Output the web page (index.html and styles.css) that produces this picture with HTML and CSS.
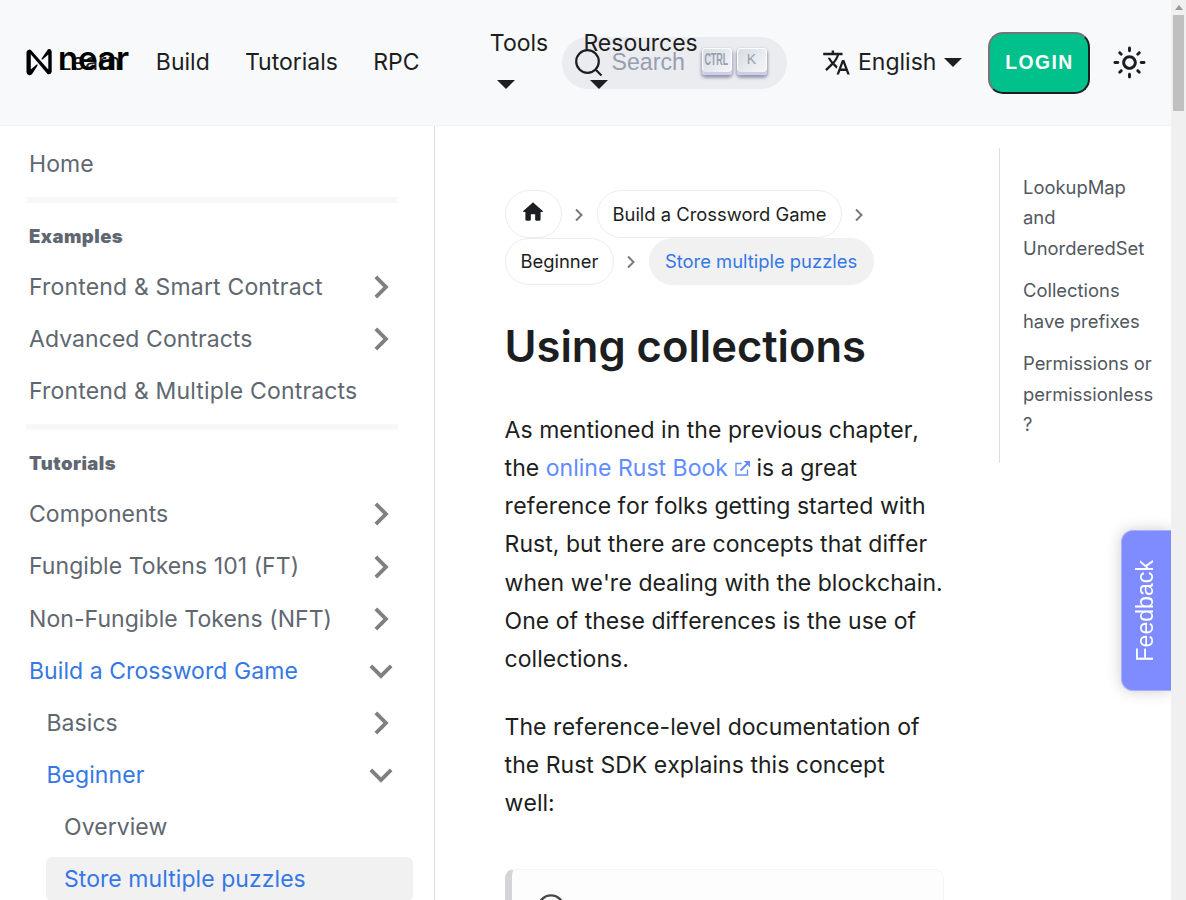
FILE: index.html
```html
<!DOCTYPE html>
<html lang="en">
<head>
<meta charset="utf-8">
<title>Using collections</title>
<link rel="stylesheet" href="styles.css">
</head>
<body>
<div class="page">
  <header class="navbar">
    <a class="brand">
      <svg width="26" height="28" viewBox="0 0 26 28"><path d="M22 1.2 15.6 10.600a.7.7 0 0 0 1 .9L22.300 6.500v15L4.900 1.900A3.200 3.200 0 0 0 .5 4v20a3.200 3.200 0 0 0 5.800 1.800l5.300-8.400a.7.7 0 0 0-1-.9L4.800 21.500V6.300L21.500 26a3.200 3.200 0 0 0 4.200-2V3.500A3 3 0 0 0 22 1.200z"/></svg>
      <span class="wordmark">near</span>
    </a>
    <nav class="links">
      <a>Learn</a><a>Build</a><a>Tutorials</a><a>RPC</a>
      <span class="divider"></span>
      <a class="stacked">Tools<i class="caret"></i></a>
      <a class="stacked res">Resources<i class="caret"></i></a>
    </nav>
    <div class="search">
      <svg class="lens" width="28" height="28" viewBox="0 0 28 28" fill="none" stroke="#1c1e21" stroke-width="2.200"><circle cx="12.500" cy="12.500" r="11.300"/><path d="m20.500 20.500 6 6"/></svg>
      <span class="placeholder">Search</span>
      <kbd class="key"><span class="ctrl">CTRL</span></kbd><kbd class="key">K</kbd>
    </div>
    <a class="lang">
      <svg width="29" height="29" viewBox="0 0 24 24" fill="#1c1e21"><path d="M12.870 15.070l-2.540-2.510.030-.030c1.740-1.940 2.980-4.170 3.710-6.530H17V4h-7V2H8v2H1v1.990h11.170C11.500 7.920 10.440 9.750 9 11.350 8.070 10.320 7.300 9.190 6.690 8h-2c.730 1.630 1.730 3.170 2.980 4.560l-5.090 5.020L4 19l5-5 3.110 3.110.760-2.040zM18.500 10h-2L12 22h2l1.120-3h4.750L21 22h2l-4.500-12zm-2.620 7l1.620-4.330L19.120 17h-3.240z"/></svg>
      <span>English</span><i class="caret"></i>
    </a>
    <button class="login">LOGIN</button>
    <svg class="sun" width="35" height="35" viewBox="0 0 24 24" fill="#1c1e21"><path d="M12,9c1.650,0,3,1.350,3,3s-1.350,3-3,3s-3-1.350-3-3S10.350,9,12,9 M12,7c-2.760,0-5,2.240-5,5s2.240,5,5,5s5-2.240,5-5 S14.760,7,12,7L12,7z M2,13l2,0c0.550,0,1-0.450,1-1s-0.450-1-1-1l-2,0c-0.550,0-1,0.450-1,1S1.450,13,2,13z M20,13l2,0c0.550,0,1-0.450,1-1 s-0.450-1-1-1l-2,0c-0.550,0-1,0.450-1,1S19.450,13,20,13z M11,2v2c0,0.550,0.450,1,1,1s1-0.450,1-1V2c0-0.550-0.450-1-1-1S11,1.450,11,2z M11,20v2c0,0.550,0.450,1,1,1s1-0.450,1-1v-2c0-0.550-0.450-1-1-1C11.450,19,11,19.450,11,20z M5.990,4.580c-0.390-0.390-1.030-0.390-1.410,0 c-0.390,0.390-0.390,1.030,0,1.410l1.060,1.060c0.390,0.390,1.030,0.390,1.410,0s0.390-1.030,0-1.410L5.990,4.580z M18.360,16.950 c-0.390-0.390-1.030-0.390-1.410,0c-0.390,0.390-0.390,1.030,0,1.410l1.060,1.060c0.390,0.390,1.030,0.390,1.410,0c0.390-0.390,0.390-1.030,0-1.410 L18.360,16.950z M19.420,5.990c0.390-0.390,0.390-1.030,0-1.410c-0.390-0.390-1.030-0.390-1.410,0l-1.060,1.060c-0.390,0.390-0.390,1.030,0,1.410 s1.030,0.390,1.410,0L19.420,5.990z M7.050,18.360c0.390-0.390,0.390-1.030,0-1.410c-0.390-0.390-1.030-0.390-1.410,0l-1.060,1.060 c-0.390,0.390-0.390,1.030,0,1.410s1.030,0.390,1.410,0L7.050,18.360z"/></svg>
  </header>
  <div class="columns">
    <aside class="sidebar">
      <a class="item">Home</a>
      <hr>
      <h2>Examples</h2>
      <a class="item wide">Frontend &amp; Smart Contract<svg class="chev"><use href="#chev"/></svg></a>
      <a class="item">Advanced Contracts<svg class="chev"><use href="#chev"/></svg></a>
      <a class="item wide">Frontend &amp; Multiple Contracts</a>
      <hr>
      <h2>Tutorials</h2>
      <a class="item">Components<svg class="chev"><use href="#chev"/></svg></a>
      <a class="item">Fungible Tokens 101 (FT)<svg class="chev"><use href="#chev"/></svg></a>
      <a class="item">Non-Fungible Tokens (NFT)<svg class="chev"><use href="#chev"/></svg></a>
      <a class="item active">Build a Crossword Game<svg class="chev open"><use href="#chev"/></svg></a>
      <a class="item l2">Basics<svg class="chev"><use href="#chev"/></svg></a>
      <a class="item l2 active">Beginner<svg class="chev open"><use href="#chev"/></svg></a>
      <a class="item l3">Overview</a>
      <a class="item l3 active current">Store multiple puzzles</a>
    </aside>
    <main class="content">
      <div class="crumbs">
        <div class="row">
          <a class="pill home"><svg width="26" height="26" viewBox="0 0 24 24"><path d="M10 19v-5h4v5c0 .55.45 1 1 1h3c.55 0 1-.45 1-1v-7h1.700c.46 0 .68-.57.33-.87L12.670 3.600c-.38-.34-.96-.34-1.340 0l-8.360 7.530c-.34.3-.13.87.33.87H5v7c0 .55.45 1 1 1h3c.55 0 1-.45 1-1z" fill="#1c1e21"/></svg></a>
          <svg class="sep"><use href="#sep"/></svg>
          <a class="pill">Build a Crossword Game</a>
          <svg class="sep"><use href="#sep"/></svg>
        </div>
        <div class="row second">
          <a class="pill">Beginner</a>
          <svg class="sep"><use href="#sep"/></svg>
          <a class="pill here">Store multiple puzzles</a>
        </div>
      </div>
      <h1>Using collections</h1>
      <p>As mentioned in the previous chapter,<br>the <a class="link">online Rust Book<svg class="ext" width="15" height="15" viewBox="0 0 15 15" fill="none" stroke="#608cff"><path d="M6.500 2.500h-5.500v11.500h11.500V8.500" stroke-width="1.300"/><path d="M5.500 9.500 12.500 2.500" stroke-width="2"/><path d="M8.800 0H15v6.200z" fill="#608cff" stroke="none"/></svg></a> is a great<br>reference for folks getting started with<br>Rust, but there are concepts that differ<br>when we're dealing with the blockchain.<br>One of these differences is the use of<br>collections.</p>
      <p>The reference-level documentation of<br>the Rust SDK explains this concept<br>well:</p>
      <div class="note"><svg width="28" height="28" viewBox="0 0 28 28" fill="none" stroke="#474748" stroke-width="2.400"><circle cx="14" cy="14" r="12.600"/></svg></div>
    </main>
    <aside class="toc">
      <a>LookupMap<br>and<br>UnorderedSet</a>
      <a>Collections<br>have prefixes</a>
      <a>Permissions or<br>permissionless<br>?</a>
    </aside>
  </div>
</div>
<div class="scrollbar"><i class="up"></i><i class="thumb"></i></div>
<div class="feedback"><span>Feedback</span></div>
<svg class="defs"><defs>
  <symbol id="chev" viewBox="0 0 24 24"><path d="M8.590 16.590 13.170 12 8.590 7.410 10 6l6 6-6 6z" fill="#808080"/></symbol>
  <symbol id="sep" viewBox="0 0 12 14"><path d="m3 1.500 5.500 5.500L3 12.500" fill="none" stroke="#7a7a7a" stroke-width="2"/></symbol>
</defs></svg>
</body>
</html>
```
FILE: styles.css
```css
* { box-sizing: border-box; }
body { margin: 0; height: 900px; overflow: hidden; display: flex; background: #fff; font: 23px/38.150px Inter, sans-serif; color: #1c1e21; }
.page { width: 1171px; height: 900px; overflow: hidden; display: flex; flex-direction: column; flex: none; }
.navbar { height: 126px; flex: none; background: #f8f9fb; border-bottom: 1px solid #f2f3f5; display: flex; align-items: center; position: relative; padding-left: 58.500px; }
.brand { position: absolute; left: 26px; top: 48px; display: flex; }
.wordmark { position: absolute; left: 32px; top: -9px; font-size: 33px; font-weight: 600; letter-spacing: -.3px; color: #000; }
.links { display: flex; align-items: center; gap: 35.200px; width: 503.500px; height: 100%; white-space: nowrap; flex: none; }
.divider { width: 2px; height: 30px; background: #999; }
.stacked { display: flex; flex-direction: column; position: relative; z-index: 1; padding-bottom: 12px; }
.stacked .caret { margin: 17px 0 0 7px; }
.caret { display: block; width: 0; border: 9px solid transparent; border-top-color: #1c1e21; border-bottom: 0; }
.search { width: 225px; height: 52px; border-radius: 26px; background: #ebecf0; display: flex; align-items: center; padding-left: 13px; flex: none; }
.placeholder { font: 23.150px/48px "Liberation Sans", sans-serif; color: #969faf; width: 89px; margin-left: 8.500px; padding-bottom: 1px; }
.key { width: 30px; height: 27px; margin: 0 4px 3px 1px; border-radius: 4px; background: linear-gradient(-225deg, #d5dbe4, #f8f8f8); box-shadow: inset 0 -3px 0 0 #cdcde6, inset 0 0 1px 1px #fff, 0 2px 3px 1px rgba(30, 35, 90, .4); font: 14px/23px "Liberation Sans", sans-serif; color: #969faf; text-align: center; }
.ctrl { display: inline-block; margin: 0 -10px; font-size: 16px; font-weight: 700; transform: scaleX(.56); }
.lang { display: flex; align-items: center; margin-left: 35px; }
.lang span { margin: 0 8px 0 7px; }
.login { width: 102px; height: 62px; margin-left: 26px; padding: 0; border: 2px solid #1c1e21; border-top-color: #767676; border-left-color: #767676; border-radius: 15px; background: #00c08b; color: #fff; font: 700 19.300px "Liberation Sans", sans-serif; letter-spacing: 1.500px; }
.sun { margin-left: 22px; }
.columns { display: flex; flex: 1; min-height: 0; }
.sidebar { width: 435px; border-right: 1px solid #dadde1; padding: 12px 21px 0 26px; flex: none; color: #606770; }
.item { display: flex; align-items: center; justify-content: space-between; height: 52.100px; padding: 0 13px 0 3px; white-space: nowrap; border-radius: 6px; letter-spacing: .06px; }
.item.wide { letter-spacing: .17px; }
.item.l2 { padding-left: 20.500px; }
.item.l3 { padding-left: 18px; margin-left: 20px; }
.active { color: #3578e5; }
.item.current { background: #f1f1f1; margin-top: 4px; height: 44px; }
.chev { width: 46px; height: 46px; margin-right: -4.400px; }
.open { transform: rotate(90deg); }
.sidebar hr { margin: 7px 15px 0 0; height: 6px; border: 0; background: #f8f8f8; }
.sidebar h2 { margin: 18px 3px 9px; font: 900 18.500px/31px Inter, sans-serif; letter-spacing: .45px; }
.content { width: 440px; margin-left: 70px; padding-top: 64px; flex: none; white-space: nowrap; }
.crumbs { font-size: 18.400px; line-height: 46px; }
.row { display: flex; align-items: center; height: 47.500px; }
.second { line-height: 45px; }
.pill { border: 1px solid #ededed; border-radius: 24px; height: 47.500px; padding: 0 15px 0 14.500px; }
.home { width: 57px; display: flex; align-items: center; justify-content: center; }
.home svg { margin: -3px 0 0 -1px; }
.sep { width: 12px; height: 14px; margin: 2px 12px 0 11px; }
.here { background: #f1f1f1; color: #3578e5; border-color: #f1f1f1; padding-right: 15.500px; }
h1 { margin: 32px 0 36px -.5px; font: 600 43.500px/58px Inter, sans-serif; }
p { margin: 0 0 29.700px -.4px; letter-spacing: .03px; font-kerning: none; }
.link { color: #608cff; }
.ext { margin: 0 0 0 7px; }
.note { margin-top: 47px; width: 439px; height: 90px; border: 1px solid #f5f5f5; border-left: 7px solid #d4d5d8; border-radius: 9px; background: #fdfdfd; padding: 24px 0 0 25px; }
.toc { margin: 22px 0 0 54px; width: 172px; height: 315px; border-left: 1px solid #dadde1; padding: 23.600px 0 0 23px; font-size: 18.400px; line-height: 30.500px; color: #525860; display: flex; flex-direction: column; gap: 12px; white-space: nowrap; }
.scrollbar { width: 15px; height: 900px; background: #f0f0f0; padding: 5px 2px 0; flex: none; }
.up { display: block; width: 0; margin: 0 auto; border: 4px solid transparent; border-top: 0; border-bottom: 5px solid #9a9a9a; }
.thumb { display: block; height: 96px; margin-top: 5px; background: #c0c0c0; }
.feedback { position: fixed; left: 1121px; top: 530px; width: 50px; height: 161px; background: #7f8cff; border: 1px solid #a9b1ff; border-right: 0; border-radius: 12px 0 0 12px; display: flex; align-items: center; justify-content: center; clip-path: inset(-20px 0 -20px -20px); box-shadow: 0 0 15px rgba(0, 0, 0, .2); color: #fff; }
.feedback span { writing-mode: vertical-rl; transform: rotate(180deg); font: 23.150px/30px "Liberation Sans", sans-serif; margin-right: 3px; }
.defs { position: absolute; width: 0; height: 0; }
```
